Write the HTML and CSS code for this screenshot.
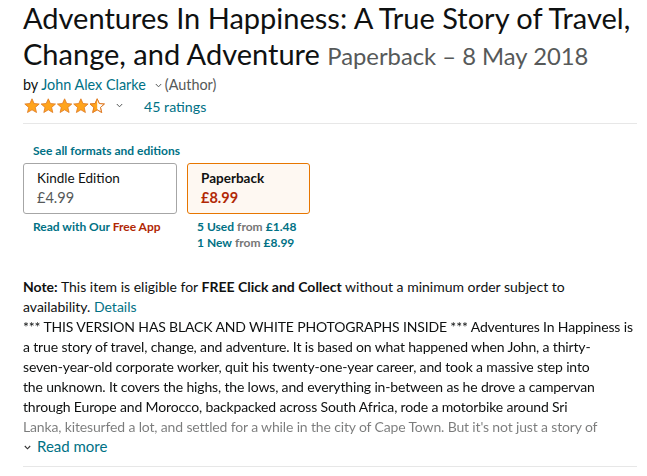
FILE: index.html
```html
<!DOCTYPE html>
<html>
<head>
<meta charset="utf-8">
<link rel="stylesheet" href="styles.css">
</head>
<body>
<div class="page">
  <h1 class="title">Adventures In Happiness: A True Story of Travel, Change, and Adventure <span class="subtitle">Paperback – 8 May 2018</span></h1>
  <div class="byline">by <a class="link">John Alex Clarke</a><svg class="chev" width="7" height="5" viewBox="0 0 7 5"><path d="M0.8 1 L3.5 3.8 L6.2 1" fill="none" stroke="#565959" stroke-width="1"/></svg><span class="role">(Author)</span></div>
  <div class="rating">
    <span class="stars">
      <svg width="82" height="16" viewBox="0 0 82 16">
        <defs>
          <path id="st" d="M8 0.8 L10.1 5.5 L15.2 6 L11.3 9.4 L12.5 14.5 L8 11.8 L3.5 14.5 L4.7 9.4 L0.8 6 L5.9 5.5 Z"/>
          <clipPath id="half"><rect x="0" y="0" width="8" height="16"/></clipPath>
        </defs>
        <use href="#st" x="0" fill="#FFA41C" stroke="#DE7921" stroke-width="0.8"/>
        <use href="#st" x="16.3" fill="#FFA41C" stroke="#DE7921" stroke-width="0.8"/>
        <use href="#st" x="32.6" fill="#FFA41C" stroke="#DE7921" stroke-width="0.8"/>
        <use href="#st" x="48.9" fill="#FFA41C" stroke="#DE7921" stroke-width="0.8"/>
        <g transform="translate(65.2 0)">
          <use href="#st" fill="#fff" stroke="#DE7921" stroke-width="0.8"/>
          <use href="#st" fill="#FFA41C" clip-path="url(#half)"/>
          <use href="#st" fill="none" stroke="#DE7921" stroke-width="0.8"/>
        </g>
      </svg>
    </span>
    <svg class="rchev" width="7" height="5" viewBox="0 0 7 5"><path d="M0.8 1 L3.5 3.8 L6.2 1" fill="none" stroke="#565959" stroke-width="1"/></svg>
    <a class="link ratings">45 ratings</a>
  </div>
  <hr class="divider">
  <div class="formats">
    <a class="link small bold">See all formats and editions</a>
    <div class="swatches">
      <div class="swatch-col">
        <div class="swatch">
          <div class="fmt">Kindle Edition</div>
          <div class="price">£4.99</div>
        </div>
        <div class="extra"><a class="link bold">Read with Our <span class="red">Free App</span></a></div>
      </div>
      <div class="swatch-col">
        <div class="swatch selected">
          <div class="fmt bold">Paperback</div>
          <div class="price red bold">£8.99</div>
        </div>
        <div class="extra offers">
          <div><a class="link bold">5 Used</a> <span class="from">from</span> <a class="link bold">£1.48</a></div>
          <div><a class="link bold">1 New</a> <span class="from">from</span> <a class="link bold">£8.99</a></div>
        </div>
      </div>
    </div>
  </div>
  <div class="desc">
    <p class="note"><b>Note:</b> This item is eligible for <b>FREE Click and Collect</b> without a minimum order subject to<br>availability. <a class="link">Details</a></p>
    <div class="blurb">*** THIS VERSION HAS BLACK AND WHITE PHOTOGRAPHS INSIDE *** Adventures In Happiness is<br>a true story of travel, change, and adventure. It is based on what happened when John, a thirty-<br>seven-year-old corporate worker, quit his twenty-one-year career, and took a massive step into<br>the unknown. It covers the highs, the lows, and everything in-between as he drove a campervan<br>through Europe and Morocco, backpacked across South Africa, rode a motorbike around Sri<br>Lanka, kitesurfed a lot, and settled for a while in the city of Cape Town. But it's not just a story of</div>
    <div class="readmore"><svg class="mchev" width="7" height="5" viewBox="0 0 7 5"><path d="M0.8 1 L3.5 3.8 L6.2 1" fill="none" stroke="#333" stroke-width="1.1"/></svg><a class="link">Read more</a></div>
  </div>
  <hr class="divider bottom">
</div>
</body>
</html>
```
FILE: styles.css
```css
* { box-sizing: border-box; }
body {
  margin: 0;
  background: #fff;
  color: #0F1111;
  font-family: Lato, "Liberation Sans", sans-serif;
  font-size: 14px;
}
.page {
  width: 647px;
  padding-left: 23px;
  padding-right: 10px;
}
.link { color: #007185; text-decoration: none; }
.bold { font-weight: 700; }
.red { color: #B12704; }
.title {
  margin: 0;
  padding-top: 0;
  font-size: 29px;
  line-height: 36px;
  font-weight: 400;
  color: #0F1111;
}
.subtitle {
  font-size: 23.8px;
  line-height: 30px;
  color: #565959;
}
.byline {
  margin-top: 3px;
  line-height: 20px;
  font-size: 14.4px;
}
.chev {
  margin: 0 3px 2px 9px;
  vertical-align: middle;
}
.role { color: #565959; }
.rating {
  display: flex;
  align-items: center;
  height: 24px;
  margin-top: -1px;
}
.stars { display: flex; padding-left: 1px; }
.rchev { margin: 0 0 2px 10px; }
.ratings { margin-left: 21px; font-size: 14.2px; }
.divider {
  border: 0;
  border-top: 1px solid #e7e7e7;
  margin: 5px 0 0 0;
  height: 0;
}
.formats { padding-top: 17px; }
.small { font-size: 12px; padding-left: 10px; }
.swatches {
  display: flex;
  gap: 10px;
  margin-top: 5px;
}
.swatch {
  border: 1px solid #a6a6a6;
  border-radius: 3px;
  height: 51px;
  padding: 5px 13px 0;
  line-height: 19px;
  font-size: 13.5px;
}
.swatch-col:first-child .swatch { width: 154px; }
.swatch-col:last-child .swatch { width: 123px; }
.swatch .price { color: #565959; font-size: 14.5px; }
.swatch.selected {
  border-color: #E77600;
  background: #FEF8F2;
}
.swatch.selected .price { color: #B12704; }
.extra {
  font-size: 12px;
  padding: 5px 0 0 10px;
  line-height: 16px;
}
.from { color: #767676; font-weight: 700; }
.desc { padding-top: 26px; line-height: 20px; font-size: 14px; }
.note { margin: 0; }
.blurb {
  height: 120px;
  overflow: hidden;
  white-space: nowrap;
  letter-spacing: -0.15px;
  -webkit-mask-image: linear-gradient(to bottom, #000 83%, rgba(0,0,0,0.55) 84%, rgba(0,0,0,0.55) 100%);
  mask-image: linear-gradient(to bottom, #000 83%, rgba(0,0,0,0.55) 84%, rgba(0,0,0,0.55) 100%);
}
.readmore {
  display: flex;
  align-items: center;
  font-size: 15px;
  line-height: 20px;
  margin-top: -1px;
}
.mchev { margin: 2px 6px 0 1px; }
.divider.bottom { margin-top: 10px; }
```
